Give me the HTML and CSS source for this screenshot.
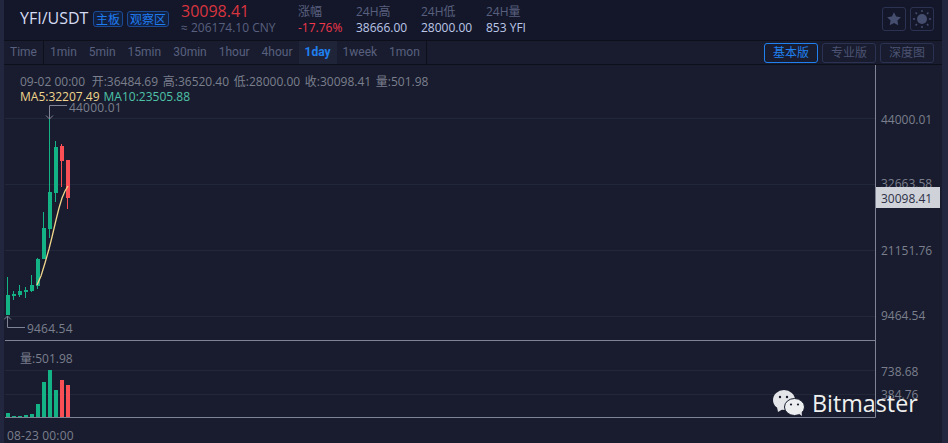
FILE: index.html
```html
<!DOCTYPE html>
<html lang="zh">
<head>
<meta charset="utf-8">
<title>YFI/USDT</title>
<link rel="stylesheet" href="styles.css">
</head>
<body>
<div class="app">
  <header class="head">
    <div class="symbol">YFI/USDT</div>
    <div class="tags"><span class="tag">主板</span><span class="tag">观察区</span></div>
    <div class="price">
      <div class="last">30098.41</div>
      <div class="cny">≈ 206174.10 CNY</div>
    </div>
    <div class="stats">
      <div class="stat s1"><span class="k">涨幅</span><span class="v red">-17.76%</span></div>
      <div class="stat s2"><span class="k">24H高</span><span class="v">38666.00</span></div>
      <div class="stat s3"><span class="k">24H低</span><span class="v">28000.00</span></div>
      <div class="stat"><span class="k">24H量</span><span class="v">853 YFI</span></div>
    </div>
    <div class="tools">
      <div class="tool"><svg width="16" height="16" viewBox="0 0 16 16"><path class="ic" d="M8 1.2l2.1 4.4 4.8.6-3.5 3.3.9 4.8L8 12l-4.300 2.300.9-4.800L1.100 6.200l4.800-.6z"/></svg></div>
      <div class="tool"><svg width="20" height="20" viewBox="0 0 18 18"><circle class="ic" cx="9" cy="9" r="4.500"/><path class="ray" d="M9 .8v2M9 15.200v2M.8 9h2M15.200 9h2M3.200 3.200l1.300 1.300M13.500 13.500l1.300 1.300M3.200 14.800l1.300-1.300M13.500 4.500l1.300-1.300"/></svg></div>
    </div>
  </header>
  <nav class="bar">
    <div class="tabs">
      <span class="tab time">Time</span><span class="tab">1min</span><span class="tab">5min</span><span class="tab">15min</span><span class="tab">30min</span><span class="tab">1hour</span><span class="tab">4hour</span><span class="tab on">1day</span><span class="tab">1week</span><span class="tab">1mon</span>
    </div>
    <div class="modes"><span class="mode active">基本版</span><span class="mode">专业版</span><span class="mode">深度图</span></div>
  </nav>
  <main class="chart">
    <svg class="plot" width="938" height="378" viewBox="4 65 938 378">
      <g class="grid">
        <path d="M5 118.500H876M5 184.500H876M5 250.500H876M5 316.500H876M5 370.500H876M5 394.500H876"/>
      </g>
      <g class="frame"><path d="M875.500 65V417.500H5M5 340.500H875.500"/></g>
      <g class="up">
        <path class="wick" d="M7.500 277V315M13.500 291V300M19.500 285V297M25.500 287V298M31.500 275V292M37.500 258V289M43.500 212V259M49.500 117V238M55.500 141V202"/>
        <rect x="6" y="295" width="4" height="20"/><rect x="12" y="294" width="4" height="2"/><rect x="18" y="291" width="4" height="4"/><rect x="24" y="290" width="4" height="2"/><rect x="30" y="285" width="4" height="6"/><rect x="36" y="259" width="4" height="27"/><rect x="42" y="228" width="4" height="31"/><rect x="48" y="192" width="4" height="37"/><rect x="54" y="147" width="4" height="46"/>
        <rect x="6" y="413" width="4" height="4"/><rect x="12" y="416" width="4" height="1"/><rect x="18" y="416" width="4" height="1"/><rect x="24" y="415" width="4" height="2"/><rect x="30" y="414" width="4" height="3"/><rect x="36" y="404" width="4" height="13"/><rect x="42" y="382" width="4" height="35"/><rect x="48" y="370" width="4" height="47"/><rect x="54" y="390" width="4" height="27"/>
      </g>
      <g class="down">
        <path class="wick" d="M61.500 144V187M67.500 160V209"/>
        <rect x="60" y="146" width="4" height="15"/><rect x="66" y="160" width="4" height="38"/>
        <rect x="60" y="380" width="4" height="37"/><rect x="66" y="385" width="4" height="32"/>
      </g>
      <path class="ma" d="M37 285L41 276L45 263L49 249L52 237L56 220L59 208L62 198L65 191L68 186"/>
      <path class="mark" d="M67 105.500H49.500V119M46 115.500L49.500 119L53 115.500"/>
      <path class="mark" d="M7.500 316V327.500H25M4 319.500L7.500 316L11 319.500"/>
      <text class="lbl spaced" x="69" y="112">44000.01</text>
      <text class="lbl spaced" x="27" y="333">9464.54</text>
      <text class="lbl" x="881" y="124">44000.01</text>
      <text class="lbl" x="881" y="188">32663.58</text>
      <text class="lbl" x="881" y="255">21151.76</text>
      <text class="lbl" x="881" y="320">9464.54</text>
      <text class="lbl" x="881" y="376">738.68</text>
      <text class="lbl" x="881" y="399">384.76</text>
      <text class="lbl" x="20" y="363">量:501.98</text>
      <text class="lbl wide" x="7" y="440">08-23 00:00</text>
      <rect class="tagbox" x="876" y="187" width="64" height="21"/>
      <text class="tagtext" x="881" y="203">30098.41</text>
    </svg>
    <div class="legend">
      <div class="ohlc"><span class="stamp">09-02 00:00</span><span>开:36484.69</span><span>高:36520.40</span><span>低:28000.00</span><span>收:30098.41</span><span>量:501.98</span></div>
      <div class="mas"><span class="ma5">MA5:32207.49</span><span class="ma10">MA10:23505.88</span></div>
    </div>
    <div class="water">
      <svg width="34" height="28" viewBox="0 0 34 28"><ellipse class="wm" cx="12" cy="11" rx="11" ry="10"/><path class="wm" d="M5 18l1 5 5-3z"/><ellipse class="wm2" cx="22.500" cy="18" rx="10" ry="8.500"/><path class="wm" d="M26 24l4 3-.5-5z"/><circle class="dot" cx="8" cy="8" r="1.200"/><circle class="dot" cx="15" cy="8" r="1.200"/><circle class="dot" cx="19" cy="15.500" r="1.100"/><circle class="dot" cx="26" cy="15.500" r="1.100"/></svg>
      <span>Bitmaster</span>
    </div>
  </main>
</div>
</body>
</html>
```
FILE: styles.css
```css
* { box-sizing: border-box; }
html, body { margin: 0; height: 100%; overflow: hidden; }
body { background: #22273f; font-family: "Open Sans", "Noto Sans CJK SC", sans-serif; }
.app { width: 948px; height: 443px; padding: 0 6px 0 4px; display: flex; flex-direction: column; }
.head { height: 41px; background: #14172a; border-bottom: 1px solid #0d0f1b; display: flex; align-items: flex-start; padding-left: 16px; }
.symbol { font-size: 16px; line-height: 20px; margin-top: 8px; color: #d5dcf2; width: 73px; }
.tags { display: flex; gap: 4px; margin-top: 11px; width: 88px; }
.tag { font-size: 12px; line-height: 15px; height: 16px; padding: 0 2px; border: 1px solid #1a4b96; border-radius: 3px; color: #1f7bf0; background: #12203f; }
.price { width: 117px; margin-top: 2px; }
.last { font-size: 16px; line-height: 19px; color: #d8353f; }
.cny { font-size: 12px; line-height: 14px; color: #59607f; }
.stats { display: flex; margin-top: 4px; }
.stat { display: flex; flex-direction: column; font-size: 12px; line-height: 16px; }
.s1 { width: 58px; } .s2 { width: 65px; } .s3 { width: 65px; }
.k { color: #59607f; }
.v { color: #bcc7e8; }
.red { color: #f0384a; }
.tools { margin-left: auto; display: flex; gap: 4px; margin-top: 7px; margin-right: 8px; }
.tool { width: 24px; height: 24px; border: 1px solid #2c3352; border-radius: 3px; display: flex; align-items: center; justify-content: center; }
.ic { fill: #464e70; }
.ray { stroke: #464e70; stroke-width: 1.300; fill: none; }
.bar { height: 24px; background: #181c2e; border-bottom: 1px solid #0d0f1b; display: flex; justify-content: space-between; }
.tabs { display: flex; font-family: Roboto, sans-serif; font-size: 12px; line-height: 23px; color: #59607f; border-right: 1px solid #0d0f1b; }
.tab { padding: 0 6px; }
.time { border-right: 1px solid #0d0f1b; }
.on { background: #1f2438; color: #2080f0; font-weight: 700; }
.modes { display: flex; gap: 4px; margin: 2px 8px 0 0; }
.mode { width: 54px; height: 20px; line-height: 18px; text-align: center; font-size: 12px; color: #4c5373; border: 1px solid #2c3352; border-radius: 3px; }
.active { color: #2080f0; border-color: #2080f0; }
.chart { position: relative; flex: 1; background: #181c2e; overflow: hidden; }
.plot { position: absolute; left: 0; top: 0; display: block; }
.grid path { stroke: #22273a; stroke-width: 1; fill: none; }
.frame path { stroke: #7f8494; stroke-width: 1; fill: none; }
.up rect { fill: #14b386; } .up .wick { stroke: #14b386; stroke-width: 1; fill: none; }
.down rect { fill: #fa4f55; } .down .wick { stroke: #fa4f55; stroke-width: 1; fill: none; }
.ma { fill: none; stroke: #f0d58c; stroke-width: 1.300; }
.mark { fill: none; stroke: #7f8494; stroke-width: 1; }
.lbl { font-size: 12px; fill: #7b7f8d; }
.wide { letter-spacing: .15px; }
.spaced { letter-spacing: .2px; }
.tagbox { fill: #cfd2d8; }
.tagtext { font-size: 12px; fill: #2b3048; }
.legend { position: absolute; left: 16px; top: 9px; font-size: 12px; line-height: 16px; color: #7b7f8d; }
.ohlc { display: flex; gap: 4.700px; }
.stamp { margin-right: 2px; }
.mas { display: flex; gap: 4px; margin-top: -1px; }
.ma5 { color: #f0d58c; }
.ma10 { color: #4fc3a8; }
.water { position: absolute; left: 768px; top: 323px; display: flex; align-items: center; gap: 6px; color: #f0f0f0; font-size: 23.300px; line-height: 30px; }
.wm { fill: #e4e5e8; }
.wm2 { fill: #eceef0; stroke: #181c2e; stroke-width: 1; }
.dot { fill: #181c2e; }
```
